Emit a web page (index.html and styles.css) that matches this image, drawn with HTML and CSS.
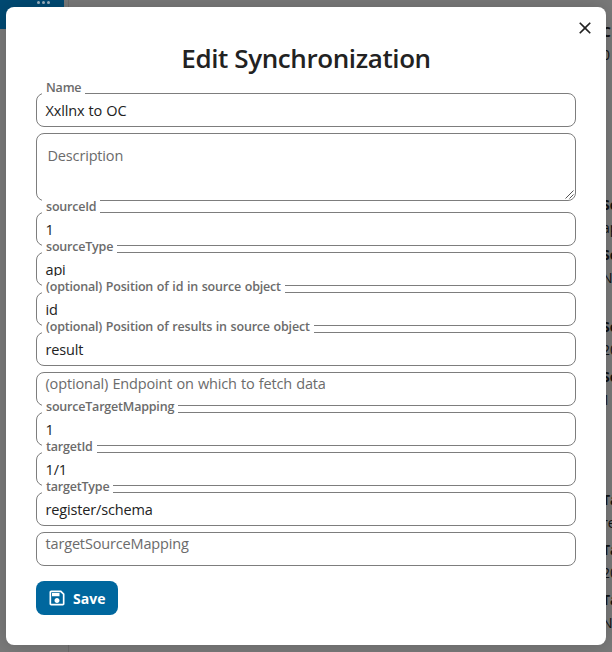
FILE: index.html
```
<!DOCTYPE html>
<html lang="en">
<head>
<meta charset="utf-8">
<title>Edit Synchronization</title>
<link rel="stylesheet" href="styles.css">
</head>
<body>
<div class="app">
  <aside class="nav"><div class="nav-active"><i></i><i></i><i></i></div></aside>
  <div class="details">
    <dl class="group g1"><dt>C</dt><dd>0</dd></dl>
    <dl class="group g2"><dt>So</dt><dd>ap</dd><dt>So</dt><dd>N</dd></dl>
    <dl class="group g3"><dt>So</dt><dd>20</dd><dt>So</dt><dd>1</dd></dl>
    <dl class="group g4"><dt>Ta</dt><dd>re</dd><dt>Ta</dt><dd>20</dd><dt>Ta</dt><dd>N</dd></dl>
  </div>
</div>
<div class="mask">
  <main class="modal">
    <svg class="close" viewBox="0 0 24 24"><path d="M19 6.41 17.59 5 12 10.59 6.41 5 5 6.41 10.59 12 5 17.59 6.41 19 12 13.41 17.59 19 19 17.59 13.41 12z"/></svg>
    <h2>Edit Synchronization</h2>
    <form class="form">
      <div class="field"><span class="label">Name</span><span class="value">Xxllnx to OC</span></div>
      <div class="field area"><span class="value hint">Description</span>
        <svg class="grip" viewBox="0 0 9 9"><path d="M0.5 8.5 8.5 0.5M4.5 8.5 8.5 4.5"/></svg></div>
      <div class="field"><span class="label">sourceId</span><span class="value">1</span></div>
      <div class="field"><span class="label">sourceType</span><span class="value">api</span></div>
      <div class="field"><span class="label">(optional) Position of id in source object</span><span class="value">id</span></div>
      <div class="field"><span class="label">(optional) Position of results in source object</span><span class="value">result</span></div>
      <div class="field empty"><span class="value hint">(optional) Endpoint on which to fetch data</span></div>
      <div class="field"><span class="label">sourceTargetMapping</span><span class="value">1</span></div>
      <div class="field"><span class="label">targetId</span><span class="value">1/1</span></div>
      <div class="field"><span class="label">targetType</span><span class="value">register/schema</span></div>
      <div class="field empty"><span class="value hint">targetSourceMapping</span></div>
    </form>
    <button class="save" type="button">
      <svg viewBox="0 0 24 24"><path d="M17 3H5C3.89 3 3 3.9 3 5V19C3 20.1 3.89 21 5 21H19C20.1 21 21 20.1 21 19V7L17 3M19 19H5V5H16.17L19 7.83V19M12 12C10.34 12 9 13.34 9 15S10.34 18 12 18 15 16.66 15 15 13.66 12 12 12M6 6H15V10H6V6Z"/></svg>
      <span>Save</span>
    </button>
  </main>
</div>
</body>
</html>
```

FILE: styles.css
```
* { box-sizing: border-box; }
body {
  margin: 0;
  width: 612px;
  height: 652px;
  overflow: hidden;
  font: 15px/20px "Open Sans", "Noto Sans", sans-serif;
  color: #222;
  background: #7a7a7a;
}
.app { display: flex; height: 652px; justify-content: space-between; }
.nav { width: 69px; border-right: 1px solid #6c6c6c; }
.nav-active {
  display: flex;
  justify-content: center;
  gap: 2px;
  width: 64px;
  height: 29px;
  padding: 1px 0 0 22px;
  background: #004a73;
}
.nav-active i { width: 3px; height: 3px; border-radius: 50%; background: #9db3c2; }
.details { width: 10px; overflow: hidden; color: #111; font-size: 14px; line-height: 23px; }
.group { margin: 0; }
.group dt { font-weight: 700; height: 23px; }
.group dd { margin: 0 0 4px; height: 23px; }
.g1 { margin-top: 20px; }
.g2 { margin-top: 127px; }
.g3 { margin-top: 26px; }
.g4 { margin-top: 77px; }
.mask { position: absolute; inset: 0; padding: 7px 6px; }
.modal {
  position: relative;
  width: 600px;
  height: 638px;
  padding: 31px 30px 30px;
  border-radius: 8px;
  background: #fff;
  box-shadow: 0 0 20px rgba(0, 0, 0, .18);
}
.close { position: absolute; top: 11px; right: 11px; width: 20px; height: 20px; fill: #222; }
h2 {
  margin: 0 0 15px;
  font-size: 26px;
  line-height: 40px;
  font-weight: 600;
  text-align: center;
  letter-spacing: -.4px;
}
.form { display: flex; flex-direction: column; gap: 6px; }
.field {
  position: relative;
  height: 34px;
  padding: 7px 8.5px 0;
  border: 1px solid #7d7d7d;
  border-radius: 8px;
}
.value { display: block; font-size: 14.5px; letter-spacing: -.16px; word-spacing: .6px; white-space: nowrap; }
.hint { color: #6b6b6b; }
.label {
  position: absolute;
  left: 5px;
  top: -17px;
  height: 19px;
  padding: 2px 4px 0;
  background: #fff;
  color: #6b6b6b;
  font-size: 12.5px;
  line-height: 18px;
  font-weight: 600;
  letter-spacing: -.2px;
  word-spacing: .7px;
  white-space: nowrap;
}
.area { height: 68px; margin-bottom: 5px; padding: 12px 10.5px; }
.grip { position: absolute; right: 1px; bottom: 1px; width: 9px; height: 9px; stroke: #555; fill: none; }
.empty { padding-top: 1px; }
.save {
  display: flex;
  align-items: center;
  gap: 6px;
  width: 82px;
  height: 34px;
  margin-top: 15px;
  padding: 0 0 0 11px;
  border: 0;
  border-radius: 8px;
  background: #00679e;
  color: #fff;
  font: 700 14px/20px "Open Sans", sans-serif;
}
.save svg { width: 20px; height: 20px; fill: #fff; }
.save span { padding-top: 1px; }
```
